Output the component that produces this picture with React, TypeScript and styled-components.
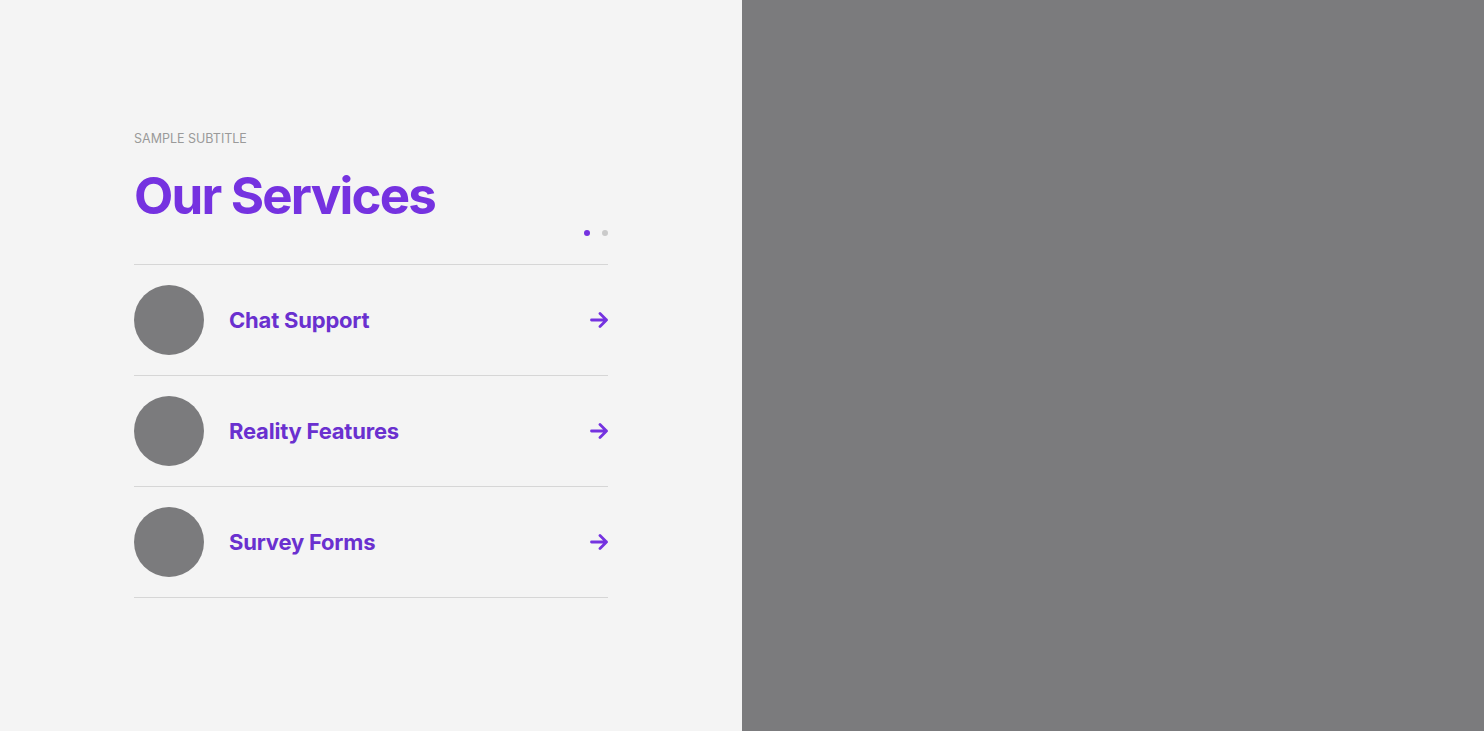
import React from "react";
import styled, { createGlobalStyle } from "styled-components";

const Global = createGlobalStyle`
  html, body { margin: 0; padding: 0; }
  body { font-family: Inter, "Noto Sans", sans-serif; background: #f4f4f4; }
  * { box-sizing: border-box; }
`;

const Page = styled.div`
  display: grid;
  grid-template-columns: 742px 1fr;
  height: 731px;
`;

const LeftPanel = styled.section`
  background: #f4f4f4;
  display: flex;
  flex-direction: column;
  padding: 131px 0 0 134px;
`;

const RightPanel = styled.div`
  background: #7b7b7d;
`;

const Content = styled.div`
  width: 474px;
  display: flex;
  flex-direction: column;
`;

const Subtitle = styled.div`
  font-size: 12.5px;
  line-height: 15px;
  color: #9a9a9a;
  text-transform: uppercase;
`;

const Title = styled.h2`
  margin: 19px 0 0;
  font-size: 51px;
  line-height: 62px;
  font-weight: 700;
  letter-spacing: -1.8px;
  color: #7532e0;
`;

const Dots = styled.div`
  display: flex;
  justify-content: flex-end;
  gap: 12px;
  padding-right: 0;
  margin-top: 3px;
  height: 34px;
`;

const Dot = styled.span<{ $active?: boolean }>`
  width: 6px;
  height: 6px;
  border-radius: 50%;
  background: ${(p) => (p.$active ? "#7532e0" : "#cacaca")};
`;

const List = styled.ul`
  list-style: none;
  margin: 0;
  padding: 0;
  border-top: 1px solid #d6d6d6;
`;

const Row = styled.li`
  display: flex;
  align-items: center;
  height: 111px;
  border-bottom: 1px solid #d6d6d6;
`;

const Avatar = styled.div`
  width: 70px;
  height: 70px;
  border-radius: 50%;
  background: #7b7b7d;
  flex-shrink: 0;
`;

const Label = styled.span`
  margin-left: 25px;
  flex: 1;
  font-size: 22px;
  font-weight: 700;
  letter-spacing: -0.2px;
  color: #6a30cf;
`;

const ArrowIcon = () => (
  <svg width="18" height="18" viewBox="0 0 18 18" fill="none">
    <path d="M1.5 9h15M10 2.5l6.5 6.5-6.5 6.5" stroke="#7532e0" strokeWidth="2.8" strokeLinecap="round" strokeLinejoin="round" />
  </svg>
);

const items = ["Chat Support", "Reality Features", "Survey Forms"];

export default function App() {
  return (
    <>
      <Global />
      <Page>
        <LeftPanel>
          <Content>
            <Subtitle>Sample Subtitle</Subtitle>
            <Title>Our Services</Title>
            <Dots>
              <Dot $active />
              <Dot />
            </Dots>
            <List>
              {items.map((t) => (
                <Row key={t}>
                  <Avatar />
                  <Label>{t}</Label>
                  <ArrowIcon />
                </Row>
              ))}
            </List>
          </Content>
        </LeftPanel>
        <RightPanel />
      </Page>
    </>
  );
}
